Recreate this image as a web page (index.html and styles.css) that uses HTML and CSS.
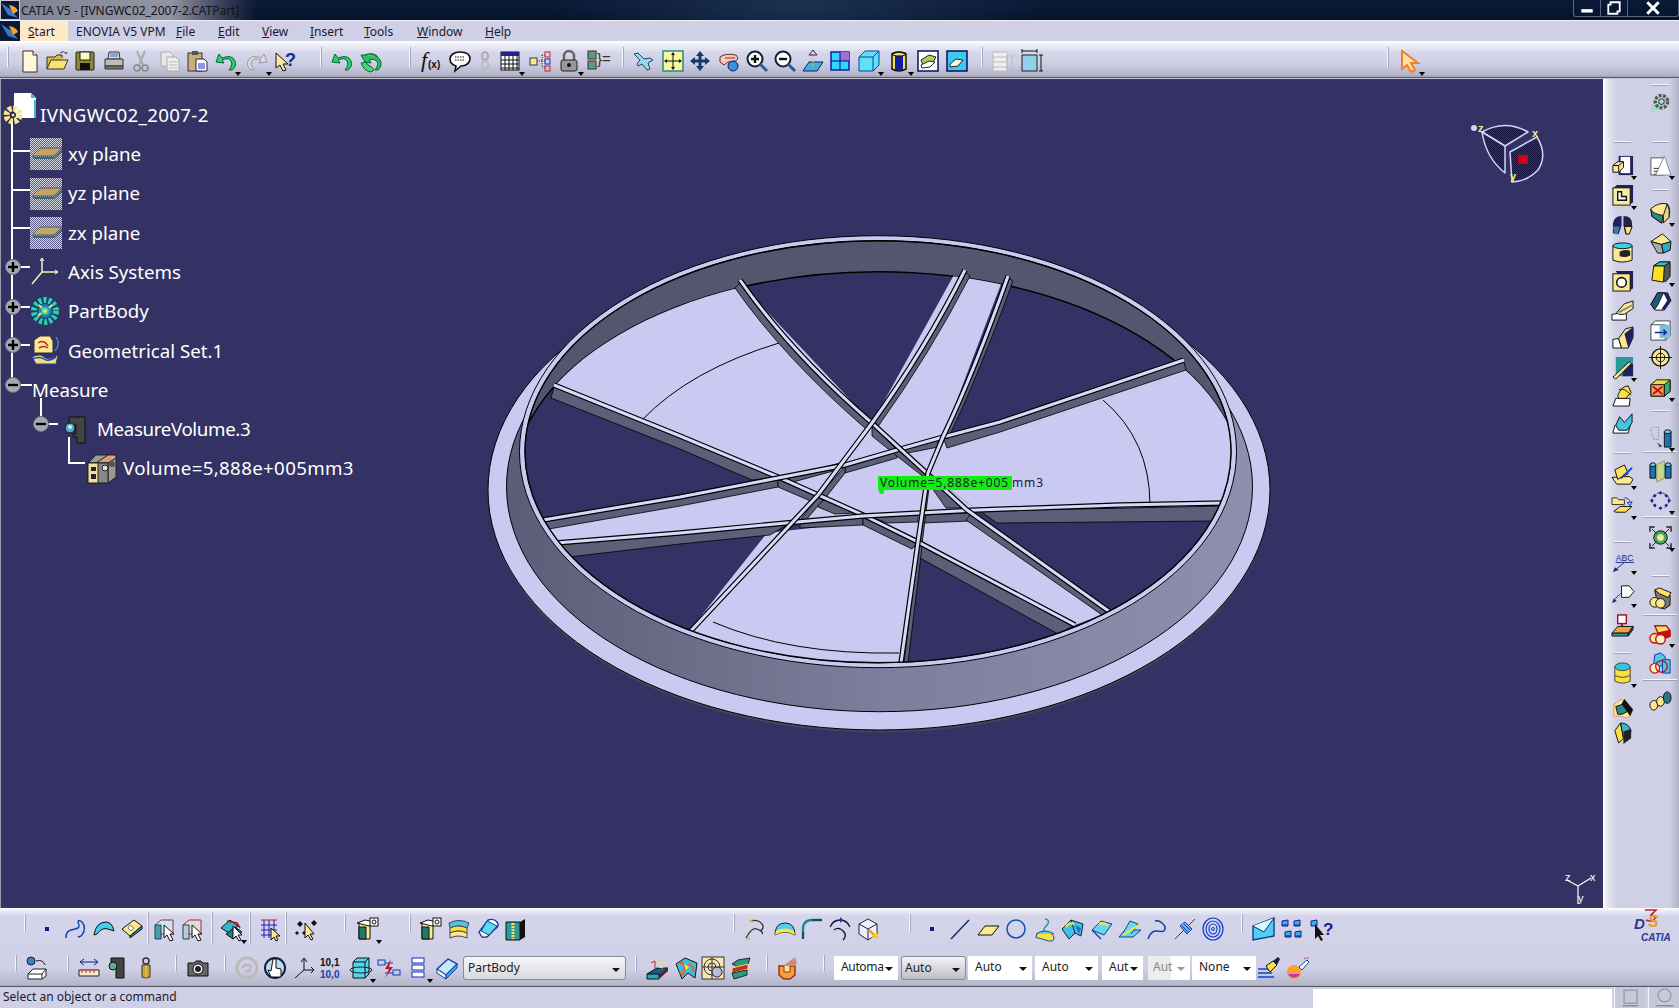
FILE: index.html
```html
<!DOCTYPE html>
<html lang="en">
<head>
<meta charset="utf-8">
<title>CATIA V5 - [IVNGWC02_2007-2.CATPart]</title>
<link rel="stylesheet" href="styles.css">
</head>
<body>
<div class="app">

<header class="title">
  <svg class="logo" viewBox="0 0 20 20"><rect width="20" height="20" fill="#0a1a3a"/><path d="M1 3l9 6 8 9-10-3z" fill="#3a7ac8"/><path d="M9 5q7 1 9 6l-5 3z" fill="#f8a030"/><rect x=".5" y=".5" width="19" height="19" fill="none" stroke="#ccc"/></svg>
  <span class="title-text">CATIA V5 - [IVNGWC02_2007-2.CATPart]</span>
  <div class="winbtns">
    <span class="wb wb-min"><svg viewBox="0 0 20 14"><rect x="5" y="8" width="10" height="3" fill="#fff"/></svg></span>
    <span class="wb wb-max"><svg viewBox="0 0 20 14"><path d="M7 2h8v8h-2v2H5V4h2z" fill="none" stroke="#fff" stroke-width="1.6"/></svg></span>
    <span class="wb wb-close"><svg viewBox="0 0 30 14"><path d="M10 2l10 10M20 2L10 12" stroke="#fff" stroke-width="2.6"/></svg></span>
  </div>
</header>

<nav class="menu">
  <svg class="logo" viewBox="0 0 20 20"><rect width="20" height="20" fill="#0a1a3a"/><path d="M1 3l9 6 8 9-10-3z" fill="#3a7ac8"/><path d="M9 5q7 1 9 6l-5 3z" fill="#f8a030"/></svg>
  <span class="m m-start"><u>S</u>tart</span>
  <span class="m">ENOVIA V5 VPM</span>
  <span class="m"><u>F</u>ile</span>
  <span class="m"><u>E</u>dit</span>
  <span class="m"><u>V</u>iew</span>
  <span class="m"><u>I</u>nsert</span>
  <span class="m"><u>T</u>ools</span>
  <span class="m"><u>W</u>indow</span>
  <span class="m"><u>H</u>elp</span>
  <div class="mdi">
    <span class="mb"><svg viewBox="0 0 16 16"><rect x="4" y="10" width="8" height="2" fill="#99a"/></svg></span>
    <span class="mb"><svg viewBox="0 0 16 16"><path d="M6 3h7v6h-2v4H3V6h3z" fill="none" stroke="#99a"/></svg></span>
    <span class="mb"><svg viewBox="0 0 16 16"><path d="M4 4l8 8M12 4l-8 8" stroke="#99a" stroke-width="1.5"/></svg></span>
  </div>
</nav>

<div class="bar top">
  <i class="grip"></i>
  <span class="i l8"><svg viewBox="0 0 24 24"><path d="M5 2h10l4 4v17H5z" fill="#fff8d8" stroke="#333"/><path d="M15 2v4h4" fill="#fff" stroke="#333"/></svg></span>
  <span class="i l1"><svg viewBox="0 0 24 24"><path d="M2 20V8h8l2-2h5v3" fill="#e0b840" stroke="#333"/><path d="M2 20l4-9h17l-4 9z" fill="#fce070" stroke="#333"/><path d="M15 4q4-3 6 1l1-2" fill="none" stroke="#333"/></svg></span>
  <span class="i l2"><svg viewBox="0 0 24 24"><rect x="3" y="3" width="18" height="18" rx="1" fill="#8a8a30" stroke="#222"/><rect x="7" y="3" width="10" height="8" fill="#fff8c0" stroke="#222"/><rect x="7" y="14" width="10" height="7" fill="#111"/></svg></span>
  <span class="i l3"><svg viewBox="0 0 24 24"><path d="M7 3h10l1 7H6z" fill="#dde" stroke="#333"/><path d="M8 5h8M8 7h8" stroke="#36c"/><path d="M3 10h18v7H3z" fill="#bbb" stroke="#333"/><path d="M3 17h18v3H3z" fill="#776" stroke="#333"/></svg></span>
  <span class="i l1"><svg viewBox="0 0 24 24"><path d="M8 2l6 14M16 2L10 16" stroke="#aaa" stroke-width="2"/><circle cx="8" cy="19" r="3" fill="none" stroke="#888" stroke-width="1.5"/><circle cx="16" cy="19" r="3" fill="none" stroke="#888" stroke-width="1.5"/></svg></span>
  <span class="i l3"><svg viewBox="0 0 24 24"><path d="M3 3h9l3 3v11H3z" fill="#e8e8e8" stroke="#aaa"/><path d="M9 8h9l3 3v11H9z" fill="#eee" stroke="#aaa"/><path d="M11 13h8M11 16h8M11 19h8" stroke="#bbb"/></svg></span>
  <span class="i l1"><svg viewBox="0 0 24 24"><rect x="3" y="4" width="14" height="18" fill="#c8b078" stroke="#333"/><rect x="7" y="2" width="6" height="4" fill="#555"/><path d="M11 10h8l3 3v9H11z" fill="#fff" stroke="#225"/><path d="M13 15h7M13 17h7M13 19h7" stroke="#22c"/></svg></span>
  <span class="i l3 d"><svg viewBox="0 0 24 24"><path d="M5 5l-3 8 8 1-2-3q7-3 9 1 2 3 0 6l-2 3h3q5-4 3-9-3-7-13-3z" fill="#30d070" stroke="#063"/></svg></span>
  <span class="i l5 d"><svg viewBox="0 0 24 24"><path d="M19 5l3 8-8 1 2-3q-7-3-9 1-2 3 0 6l2 3H6q-5-4-3-9 3-7 13-3z" fill="#ddd" stroke="#999"/></svg></span>
  <span class="i l2"><svg viewBox="0 0 24 24"><path d="M3 4v15l4-3 3 6 3-1-3-6h5z" fill="#ffe8a0" stroke="#111"/><text x="12" y="17" class="q">?</text></svg></span>
  <i class="grip l22"></i>
  <span class="i l7"><svg viewBox="0 0 24 24"><path d="M5 5l-3 8 8 1-2-3q7-3 9 1 2 3 0 6l-2 3h3q5-4 3-9-3-7-13-3z" fill="#30d070" stroke="#063"/></svg></span>
  <span class="i l2"><svg viewBox="0 0 24 24"><path d="M3 6l4 7 6 1-2-3q5-2 8 1 2 3 0 6l-2 3h3q5-5 2-10-5-9-13-5z" fill="#30c060" stroke="#063"/><path d="M3 14l5-1 2 3q4 1 6 5l-3 2q-7-1-10-9zM7 6q6-3 12 2" fill="#50d080" stroke="#063"/></svg></span>
  <i class="grip l26"></i>
  <span class="i l7"><svg viewBox="0 0 24 24"><text x="2" y="18" class="fx">f</text><text x="9" y="19" class="fx2">(x)</text></svg></span>
  <span class="i l3"><svg viewBox="0 0 24 24"><path d="M12 3c7 0 10 3 10 7s-4 7-9 7l-6 5 1-5c-3-1-6-3-6-7s4-7 10-7z" fill="#fff" stroke="#111" stroke-width="1.6"/><path d="M7 8h10M7 11h10" stroke="#111" stroke-dasharray="1.5 1"/></svg></span>
  <span class="i n l5"><svg viewBox="0 0 14 24"><ellipse cx="7" cy="7" rx="3" ry="4" fill="none" stroke="#aaa" stroke-width="2"/><ellipse cx="7" cy="16" rx="3" ry="4" fill="none" stroke="#bbb" stroke-width="2"/></svg></span>
  <span class="i l5 d"><svg viewBox="0 0 24 24"><rect x="3" y="3" width="18" height="18" fill="#fff" stroke="#111"/><path d="M3 11h18M3 15h18M3 19h18M7 7v14M11 7v14M15 7v14M19 7v14" stroke="#111"/><rect x="3" y="3" width="18" height="4" fill="#22228a"/></svg></span>
  <span class="i l4"><svg viewBox="0 0 24 24"><path d="M9 12h5M14 6v12M14 6h3M14 12h3M14 18h3" stroke="#333" stroke-dasharray="1 1"/><rect x="2" y="9" width="7" height="7" fill="#ffe880" stroke="#336"/><rect x="17" y="3" width="5" height="5" fill="none" stroke="#c22"/><rect x="17" y="10" width="5" height="5" fill="none" stroke="#22c"/><rect x="17" y="17" width="5" height="5" fill="none" stroke="#c22"/></svg></span>
  <span class="i l3 d"><svg viewBox="0 0 24 24"><path d="M7 11V7a5 5 0 0110 0v4" fill="none" stroke="#666" stroke-width="2.5"/><rect x="4" y="11" width="16" height="11" rx="2" fill="#999" stroke="#222"/><circle cx="12" cy="16" r="2" fill="#111"/></svg></span>
  <span class="i l2"><svg viewBox="0 0 24 24"><rect x="3" y="2" width="8" height="8" fill="#887" stroke="#333"/><rect x="5" y="4" width="4" height="4" fill="#3a8"/><rect x="3" y="12" width="8" height="8" fill="#887" stroke="#333"/><rect x="5" y="14" width="4" height="4" fill="#3a8"/><text x="12" y="15" class="br">}=</text></svg></span>
  <i class="grip l12"></i>
  <span class="i l7"><svg viewBox="0 0 24 24"><path d="M2 5l4-1 6 6 6-1 3 2-5 3 2 6-3 1-5-6-4 2-1-2 3-4z" fill="#9ad8f0" stroke="#246"/></svg></span>
  <span class="i l3"><svg viewBox="0 0 24 24"><rect x="2" y="2" width="20" height="20" fill="#f8f8a0" stroke="#2a8a7a" stroke-width="1.5"/><path d="M12 5v14M5 12h14" stroke="#111"/><path d="M12 3l2 3h-4zM12 21l2-3h-4zM3 12l3-2v4zM21 12l-3-2v4z" fill="#111"/></svg></span>
  <span class="i l1"><svg viewBox="0 0 24 24"><path d="M12 2l4 5h-2.500v3.500H17V8l5 4-5 4v-2.500h-3.500V17H16l-4 5-4-5h2.500v-3.500H7V16l-5-4 5-4v2.500h3.500V7H8z" fill="#123a6a"/></svg></span>
  <span class="i l3"><svg viewBox="0 0 24 24"><path d="M3 8q5-4 16-2l2 3-2 3-8 1-4 3-4-3z" fill="#f8c8c0" stroke="#533"/><circle cx="16" cy="17" r="5" fill="#3a90e0" stroke="#025"/><path d="M8 9h10" stroke="#a22"/></svg></span>
  <span class="i l2"><svg viewBox="0 0 24 24"><circle cx="10" cy="10" r="7.500" fill="#fff" stroke="#123" stroke-width="2"/><path d="M15 15l7 7" stroke="#2a5a9a" stroke-width="3"/><path d="M6 10h8M10 6v8" stroke="#111" stroke-width="2.400"/></svg></span>
  <span class="i l2"><svg viewBox="0 0 24 24"><circle cx="10" cy="10" r="7.500" fill="#fff" stroke="#123" stroke-width="2"/><path d="M15 15l7 7" stroke="#2a5a9a" stroke-width="3"/><path d="M6 10h8" stroke="#111" stroke-width="2.400"/></svg></span>
  <span class="i l2"><svg viewBox="0 0 24 24"><path d="M2 22l6-9h14l-6 9z" fill="#4ab0d8" stroke="#025"/><path d="M12 17V6" stroke="#e8c020" stroke-dasharray="2 1"/><path d="M12 1l4 5H8z" fill="none" stroke="#225"/></svg></span>
  <span class="i l1"><svg viewBox="0 0 24 24"><rect x="3" y="3" width="18" height="18" fill="#30d8f8" stroke="#1010a0" stroke-width="1.400"/><rect x="12" y="3" width="9" height="9" fill="#a070d0"/><path d="M12 3v18M3 12h18" stroke="#00a"/></svg></span>
  <span class="i l3 d"><svg viewBox="0 0 24 24"><path d="M2 8l6-6h14v14l-6 6H2z" fill="#60e0f8" stroke="#1040a0"/><path d="M2 8h14v14M16 8l6-6" fill="none" stroke="#1040a0"/></svg></span>
  <span class="i l4 d"><svg viewBox="0 0 24 24"><path d="M5 5q7-4 14 0v15q-7 4-14 0z" fill="#f0e060" stroke="#111" stroke-width="1.500"/><path d="M8 7h8v14H8z" fill="#1020a0"/><ellipse cx="12" cy="5" rx="7" ry="2" fill="none" stroke="#111"/></svg></span>
  <span class="i l3"><svg viewBox="0 0 24 24"><rect x="2" y="2" width="20" height="20" fill="#fff" stroke="#000050" stroke-width="1.400"/><path d="M5 11l8-5 7 2-4 7-9 1z" fill="#a8d060" stroke="#222"/><path d="M5 16l8-4 6 1-5 5-8 1z" fill="#fff" stroke="#222"/></svg></span>
  <span class="i l3"><svg viewBox="0 0 24 24"><rect x="2" y="2" width="20" height="20" fill="#40c8f0" stroke="#000050" stroke-width="1.400"/><path d="M5 15l6-5 7 1-5 6-8 1z" fill="#f8f8e8" stroke="#222"/></svg></span>
  <i class="grip l11"></i>
  <span class="i l7"><svg viewBox="0 0 24 24"><path d="M2 3h14v19H2zM2 8h14M2 13h14M2 18h14M16 7v15M21 7v15M18 7h6M18 22h6" fill="#eee" stroke="#bbb"/></svg></span>
  <span class="i l3"><svg viewBox="0 0 24 24"><rect x="2" y="6" width="15" height="16" fill="#90d0e8" stroke="#222"/><path d="M2 2h15M2 0v4M17 0v4M21 6v16M19 6h4M19 22h4" fill="none" stroke="#111"/></svg></span>
  <i class="grip push"></i>
  <span class="i l8 d"><svg viewBox="0 0 24 24"><path d="M4 2v18l5-4 4 7 4-2-4-7h7z" fill="#ffe0b0" stroke="#f08020" stroke-width="2"/></svg></span>
</div>
<div class="shade"></div>

<div class="mid">
  <main class="view">
    <svg class="canvas" viewBox="0 79 1602 829">
      <defs>
        <linearGradient id="band" x1="0" x2="1" y1="0" y2="0"><stop offset="0" stop-color="#5c5c78"/><stop offset=".5" stop-color="#7e7e9c"/><stop offset="1" stop-color="#8e8eae"/></linearGradient>
        <pattern id="dith" width="2" height="2" patternUnits="userSpaceOnUse"><rect width="2" height="2" fill="#5a5a86"/><rect width="1" height="1" fill="#d8d8e4"/><rect x="1" y="1" width="1" height="1" fill="#d8d8e4"/></pattern>
        <pattern id="dark" width="2" height="2" patternUnits="userSpaceOnUse"><rect width="2" height="2" fill="#343264"/><rect width="1" height="1" fill="#14143e"/><rect x="1" y="1" width="1" height="1" fill="#14143e"/></pattern>
        <clipPath id="rim"><ellipse cx="878" cy="451.700" rx="353" ry="211"/></clipPath>
        <clipPath id="floor"><ellipse cx="878" cy="486.700" rx="366" ry="215"/></clipPath>
      </defs>

      <g class="lines">
        <path d="M12 120V383M12 151H30M12 190H30M12 228H30M20 267H30M20 307H30M20 345H30M20 385H32M41 398V418M49 424H58M69 437V463H85"/>
      </g>
      <g class="node"><circle cx="13" cy="267" r="7.500"/><path d="M8 267h10M13 262v10"/></g>
      <g class="node"><circle cx="13" cy="307" r="7.500"/><path d="M8 307h10M13 302v10"/></g>
      <g class="node"><circle cx="13" cy="345" r="7.500"/><path d="M8 345h10M13 340v10"/></g>
      <g class="node"><circle cx="13" cy="385" r="7.500"/><path d="M8 385h10"/></g>
      <g class="node"><circle cx="41" cy="424" r="7.500"/><path d="M36 424h10"/></g>

      <g class="part">
        <ellipse cx="879" cy="492.500" rx="391" ry="240" fill="#44445a"/>
        <ellipse class="lav" cx="879" cy="490" rx="391" ry="240"/>
        <ellipse cx="879.500" cy="486.700" rx="373" ry="225" fill="url(#band)" stroke="#000"/>
        <ellipse class="lav" cx="878" cy="451.700" rx="358.500" ry="216"/>
        <ellipse cx="878" cy="451.700" rx="353" ry="211" fill="#55556f" stroke="#000"/>
        <g clip-path="url(#rim)">
          <ellipse cx="878" cy="486.700" rx="366" ry="215" fill="#343264" stroke="#000" stroke-width="1.500"/>
          <g clip-path="url(#floor)">
            <path class="sec" d="M554 385L520 240 731 240 740 283 872 423 897 450 845 465 778 477z"/>
            <path class="sec" d="M965 255L1012 255 943 437 897 450 872 423z"/>
            <path class="sec" d="M1186 366L1320 320 1320 505 977 510 897 450 943 437z"/>
            <path class="sec" d="M778 477L897 450 977 510 920 545 863 516 818 497z"/>
            <path class="sec" d="M500 527L778 487 818 497 863 516 797 522 500 548z"/>
            <path class="sec" d="M767 533L863 522 920 550 901 690 600 690 690 630z"/>
            <path class="sec" d="M920 545L970 512 1110 612 1075 625z"/>
            <path class="arc" d="M642 420Q690 370 779 343"/>
            <path class="arc" d="M1103 400Q1150 440 1150 505"/>
            <path class="arc" d="M713 622Q790 655 899 653"/>
          </g>

          <path class="side" d="M1184 362L1186 370 1000 432 947 448 943 437 1000 422z"/>
          <path class="side" d="M903 447L938 440 938 447 898 455z"/>
          <path class="side" d="M897 450L845 465 845 473 897 458z"/>
          <path class="side" d="M840 463L787 477 793 482 837 470z"/>
          <path class="side" d="M778 478L680 497 543 520 543 530 680 506 778 487z"/>
          <path class="side" d="M980 511L1225 506 1214 521 997 523z"/>
          <path class="side" d="M923 515L970 513 970 521 923 523z"/>
          <path class="side" d="M872 517L918 515 918 522 887 523z"/>
          <path class="side" d="M863 517L800 520 800 528 863 525z"/>
          <path class="side" d="M790 523L680 533 556 545 569 557 680 544 770 535z"/>
          <path class="side" d="M554 387L680 436 778 477 752 480 680 449 551 398z"/>
          <path class="side" d="M778 477L818 497 813 502 778 487z"/>
          <path class="side" d="M818 497L855 513 835 514 818 507z"/>
          <path class="side" d="M863 515L918 542 912 549 863 525z"/>
          <path class="side" d="M920 545L1075 625 1058 634 920 558z"/>
          <path class="side" d="M740 283Q790 352 872 423L866 429Q784 358 735 288z"/>
          <path class="side" d="M872 425L897 450 892 452 872 436z"/>
          <path class="side" d="M897 450L928 472 925 478 893 453z"/>
          <path class="side" d="M928 473L967 508 946 508 925 478z"/>
          <path class="side" d="M970 515L1110 612 1105 617 966 520z"/>
          <path class="side" d="M965 272Q925 350 872 423L877 428Q930 354 970 276z"/>
          <path class="side" d="M845 466L818 497 823 501 845 473z"/>
          <path class="side" d="M1008 278Q975 370 943 437L948 439Q980 372 1013 281z"/>
          <path class="side" d="M818 497L800 520 806 520 823 500z"/>
          <path class="side" d="M925 480L918 542 922 544 930 480zM918 545L904 663 908 663 922 547z"/>

          <path class="rk" d="M554 385L680 436 778 477 863 515 920 543 1075 625"/>
          <path class="rl" d="M554 385L680 436 778 477 863 515 920 543 1075 625"/>
          <path class="rk" d="M1184 360L1000 422 943 437 897 450 845 465 778 478 680 497 543 520"/>
          <path class="rl" d="M1184 360L1000 422 943 437 897 450 845 465 778 478 680 497 543 520"/>
          <path class="rk" d="M1224 503L1120 505 977 510 863 516 797 522 680 533 556 543"/>
          <path class="rl" d="M1224 503L1120 505 977 510 863 516 797 522 680 533 556 543"/>
          <path class="rk" d="M740 280Q790 352 872 423L967 510 1110 612"/>
          <path class="rl" d="M740 280Q790 352 872 423L967 510 1110 612"/>
          <path class="rk" d="M965 270Q925 350 872 423L818 495 687 635"/>
          <path class="rl" d="M965 270Q925 350 872 423L818 495 687 635"/>
          <path class="rk" d="M1008 276Q975 370 943 437L928 473 918 542 901 663"/>
          <path class="rl" d="M1008 276Q975 370 943 437L928 473 918 542 901 663"/>
        </g>
        <ellipse cx="878" cy="451.700" rx="353" ry="211" fill="none" stroke="#000" stroke-width="1.400"/>
      </g>

      <g class="compass">
        <path d="M1482 132Q1505 119 1528 132L1505 146z"/>
        <path d="M1482 132Q1486 158 1505 173V146z"/>
        <path d="M1510 152L1537 137Q1548 155 1538 170 1526 182 1512 182z"/>
        <rect class="red" x="1518" y="155" width="10" height="9"/>
        <circle class="ball" cx="1474" cy="128" r="3"/>
        <text x="1478" y="132">z</text><text x="1532" y="137">x</text><text x="1510" y="180">y</text>
      </g>
      <g class="axis">
        <path d="M1578 886L1567 880M1578 886L1591 878M1578 886V904"/>
        <text x="1565" y="881">z</text><text x="1590" y="881">x</text><text x="1578" y="902">y</text>
      </g>
    </svg>

    <ul class="tree">
      <li class="row r0 ls-up"><svg class="ti ti-root" viewBox="0 0 28 30"><path d="M6 -7h17l5 5v20H6z" fill="#fff"/><path d="M23 -7l5 5h-5zM26 0h2v18h-2z" fill="#40b8e8"/><circle cx="5" cy="15" r="6.500" fill="none" stroke="#f8e890" stroke-width="6" stroke-dasharray="3.500 1.500"/><circle cx="5" cy="15" r="3" fill="#223"/><circle cx="5" cy="15" r="1.500" fill="#f8e890"/></svg><span>IVNGWC02_2007-2</span></li>
      <li class="row r1"><svg class="ti" viewBox="0 0 32 32"><rect width="32" height="32" fill="url(#dith)"/><path d="M2 18l8-8h22l-8 8z" fill="#c0a468" stroke="#556"/><path d="M2 19h22l8-8v3l-8 7H4z" fill="#3a6a7a"/></svg><span>xy plane</span></li>
      <li class="row r1"><svg class="ti" viewBox="0 0 32 32"><rect width="32" height="32" fill="url(#dith)"/><path d="M2 18l8-8h22l-8 8z" fill="#c0a468" stroke="#556"/><path d="M2 19h22l8-8v3l-8 7H4z" fill="#3a6a7a"/></svg><span>yz plane</span></li>
      <li class="row r1"><svg class="ti" viewBox="0 0 32 32"><rect width="32" height="32" fill="url(#dith)"/><path d="M2 18l8-8h22l-8 8z" fill="#c0a468" stroke="#556"/><path d="M2 19h22l8-8v3l-8 7H4z" fill="#3a6a7a"/></svg><span>zx plane</span></li>
      <li class="row r1"><svg class="ti" viewBox="0 0 32 32"><path d="M12 16V3M12 16l15 0M12 16L2 28" stroke="#f8f0b0" stroke-width="1.500" fill="none"/><path d="M10 5l2-3 2 3M25 14l3 2-3 2" stroke="#fff" fill="none"/></svg><span>Axis Systems</span></li>
      <li class="row r1"><svg class="ti" viewBox="0 0 32 32"><circle cx="15" cy="15" r="11" fill="none" stroke="#1c3c70" stroke-width="9" stroke-dasharray="5 2"/><circle cx="15" cy="15" r="11" fill="none" stroke="#30d0a8" stroke-width="6" stroke-dasharray="3 2"/><circle cx="15" cy="15" r="7" fill="#1880b0"/><circle cx="15" cy="15" r="4" fill="#30d0a8"/><circle cx="15" cy="15" r="2" fill="#f0e060"/><path d="M8 20l3-3M22 9l-3 3M9 9l3 3" stroke="#f0e060" stroke-width="2"/></svg><span>PartBody</span></li>
      <li class="row r1"><svg class="ti" viewBox="0 0 32 32"><path d="M4 5l6-4h10l3 5v12H4z" fill="#fce890" stroke="#333"/><path d="M8 8q6-4 10 3M9 13q5-3 9 0" fill="none" stroke="#c02020" stroke-width="1.500"/><path d="M2 22q8-4 12 0t14-2l-2 9H6z" fill="#f0e070" stroke="#2040c0"/><path d="M2 24q8-3 12 0t12-2" fill="none" stroke="#2040c0" stroke-width="1.500"/><path d="M26 2q5 7-1 14" fill="none" stroke="#60b0f0"/></svg><span>Geometrical Set.1</span></li>
      <li class="row r2"><span>Measure</span></li>
      <li class="row r3 ls-down"><svg class="ti ti-mv" viewBox="0 0 26 30"><path d="M6 2h16v26H14V22H10v-3h3V10H6z" fill="#444" stroke="#111"/><circle cx="7" cy="13" r="5" fill="#50a8d0" stroke="#111"/><circle cx="7" cy="12" r="2" fill="#c0f0f8"/></svg><span>MeasureVolume.3</span></li>
      <li class="row r4 ls-up"><svg class="ti ti-vol" viewBox="0 0 32 32"><path d="M2 10l8-8h20v22l-8 6H2z" fill="#999" stroke="#222"/><path d="M2 10h8l12-8h8v3l-8 5z" fill="#d8a080" stroke="#222"/><path d="M2 10h20v20H2z" fill="#f0e0a0" stroke="#222"/><path d="M12 10h10v20H12z" fill="#888" stroke="#222"/><path d="M5 14h5v4H5zM5 21h5v5H5z" fill="#222"/><circle cx="19" cy="15" r="3" fill="#ddd" stroke="#222"/><circle cx="26" cy="11" r="3" fill="#555"/></svg><span>Volume=5,888e+005mm3</span></li>
    </ul>

    <div class="vol"><span class="vol-hl">Volume=5,888e+005</span>mm3</div>
  </main>

  <aside class="dock">
    <div class="col">
      <i class="dg t62"></i>
      <span class="i t9 d"><svg viewBox="0 0 24 24"><rect x="8" y="2" width="15" height="20" fill="#202060"/><path d="M10 3h10v17H10z" fill="#fff"/><path d="M2 12l5-4h6v6l-5 5H2z" fill="#f8e8a0" stroke="#111"/><path d="M2 12h6v7M8 12l5-4" fill="none" stroke="#111"/></svg></span>
      <span class="i t4 d"><svg viewBox="0 0 24 24"><path d="M3 4l3-3h17v18l-4 3H3z" fill="#202060"/><rect x="2" y="4" width="18" height="18" fill="#f8eca0" stroke="#111"/><path d="M7 8v9h9v-4h-5V8z" fill="#fff" stroke="#111" stroke-width="1.500"/></svg></span>
      <span class="i t4"><svg viewBox="0 0 24 24"><path d="M2 20V10q1-8 9-8v10l-3 9z" fill="#202060"/><path d="M13 2q9 0 9 8v4l-4 7h-3l-2-9z" fill="#224"/><path d="M14 13h8l-3 8h-3z" fill="#f8e880" stroke="#111"/><path d="M2 13h7l-2 8H4z" fill="#3a80a0"/></svg></span>
      <span class="i t1"><svg viewBox="0 0 24 24"><path d="M2 5v15q10 4 20 0V5z" fill="#fce890" stroke="#111"/><ellipse cx="12" cy="5" rx="10" ry="3" fill="#40d0e8" stroke="#111"/><path d="M9 11q9-3 11 0v4q-5 3-11 1z" fill="#222"/></svg></span>
      <span class="i t2"><svg viewBox="0 0 24 24"><path d="M5 2h18v18l-4 3z" fill="#202060"/><rect x="2" y="5" width="18" height="18" fill="#fce890" stroke="#111"/><circle cx="11" cy="14" r="5" fill="#fff" stroke="#111" stroke-width="1.600"/></svg></span>
      <span class="i t4"><svg viewBox="0 0 24 24"><path d="M1 22v-6l7-1h8v7z" fill="#fff" stroke="#111"/><path d="M6 14l8-9 9-3v8l-9 6H8z" fill="#fce890" stroke="#111"/><path d="M8 14l15-8" stroke="#888" stroke-width="2"/></svg></span>
      <span class="i t1"><svg viewBox="0 0 24 24"><path d="M2 23V14l6-1 3 10z" fill="#fff" stroke="#111"/><path d="M8 13l7-10 8-2v11l-5 11h-7z" fill="#fce890" stroke="#111"/><path d="M14 8l9-7v11l-5 11z" fill="#202060"/></svg></span>
      <span class="i t4 d"><svg viewBox="0 0 24 24"><rect x="5" y="1" width="18" height="20" fill="#2a9a9a"/><path d="M14 10l9-2v13H12z" fill="#202060"/><path d="M2 22L19 6l2 2L5 24z" fill="#fce890" stroke="#111"/></svg></span>
      <span class="i t2"><svg viewBox="0 0 24 24"><path d="M2 23l3-8h15l-1 8z" fill="#fff" stroke="#111"/><path d="M7 12q4-10 11-10l3 7-6 6H8z" fill="#fce040" stroke="#111"/><path d="M8 6q6-3 13 6" fill="none" stroke="#223"/></svg></span>
      <span class="i t2"><svg viewBox="0 0 24 24"><path d="M2 22l2-8h16l-2 8z" fill="#fff" stroke="#111"/><path d="M5 14l4-9 5 6 8-9v9l-5 8H8z" fill="#40c8e0" stroke="#111"/></svg></span>
      <i class="dg t16"></i>
      <span class="i t8 d"><svg viewBox="0 0 24 24"><path d="M1 14l5 7h14l3-5-4-3z" fill="#fce890" stroke="#111"/><path d="M4 6l10-5 4 9-11 6z" fill="#fce060" stroke="#111"/><path d="M10 15L22 4" stroke="#1040d0" stroke-width="2"/></svg></span>
      <span class="i t4 d"><svg viewBox="0 0 24 24"><path d="M1 4h5l2 2h6v5H1z" fill="#fce890" stroke="#333"/><path d="M14 4q5 0 6 5l2-1-2 4-3-3 2 0" fill="none" stroke="#1030c0"/><path d="M3 18l7-5h12l-7 6H5z" fill="#fce060" stroke="#111"/></svg></span>
      <i class="dg t23"></i>
      <span class="i t4 d"><svg viewBox="0 0 24 24"><text x="5" y="13" class="abc">ABC</text><path d="M5 14h19M14 14L3 23" fill="none" stroke="#1a2a8a"/><path d="M2 24l2-5 4 3z" fill="#1a2a8a"/></svg></span>
      <span class="i t7 d"><svg viewBox="0 0 24 24"><path d="M11 4h8l5 6-5 6h-8z" fill="#fff" stroke="#111"/><path d="M10 12L2 20" stroke="#1a2a8a"/><path d="M1 22l2-5 3 3z" fill="#1a2a8a"/></svg></span>
      <span class="i t6"><svg viewBox="0 0 24 24"><rect x="7" y="1" width="9" height="9" fill="#fff" stroke="#a01020" stroke-width="1.500"/><path d="M11.500 10v6" stroke="#a01020" stroke-width="2"/><path d="M1 20l6-7h16l-5 7z" fill="#f0a040" stroke="#111"/><path d="M1 20h17v3H1z" fill="#30a0b0" stroke="#111"/><path d="M18 20l5-7v3l-5 7z" fill="#207080" stroke="#111"/></svg></span>
      <i class="dg t14"></i>
      <span class="i t6 d"><svg viewBox="0 0 24 24"><path d="M4 5v15q8 4 16 0V5z" fill="#fce040" stroke="#444"/><path d="M4 14q8 4 16 0" fill="none" stroke="#444"/><ellipse cx="12" cy="5" rx="8" ry="4" fill="#30c8d8" stroke="#444"/></svg></span>
      <span class="i t8"><svg viewBox="0 0 24 24"><path d="M3 9l8-6 12 13-6 7-7-2H3z" fill="#fce890" stroke="#c06020" stroke-dasharray="1 1"/><path d="M5 11l9-3 5 7-7 4H7z" fill="#2a8a8a" stroke="#111"/><path d="M14 3l9 11-3 7-9-13z" fill="#111"/></svg></span>
      <span class="i"><svg viewBox="0 0 24 24"><path d="M4 9l6-8 3 16-5 5z" fill="#fce040" stroke="#111"/><path d="M10 1q9 0 11 9l-8 7z" fill="#30b8c8" stroke="#111"/><path d="M13 10l8-3v10l-8 6z" fill="#222"/></svg></span>
    </div>
    <div class="col">
      <i class="dg t5"></i>
      <span class="i t4"><svg viewBox="0 0 24 24"><path d="M2 13L22 5 20 14 2 22z" fill="#a8d8c8"/><circle cx="13" cy="10" r="6.500" fill="none" stroke="#555" stroke-width="3.500" stroke-dasharray="3 1.500"/><circle cx="13" cy="10" r="3" fill="none" stroke="#222"/></svg></span>
      <i class="dg t25"></i>
      <span class="i t9 d"><svg viewBox="0 0 24 24"><path d="M2 4h13v18H2z" fill="#fff" stroke="#555"/><path d="M5 15h9M5 18h9M5 21h9" stroke="#222"/><path d="M7 22l9-20 7 20z" fill="#fff" stroke="#888"/></svg></span>
      <i class="dg t11"></i>
      <span class="i t8 d"><svg viewBox="0 0 24 24"><path d="M2 8q8-7 17-5 4 5 2 14l-8 6-10-7z" fill="#fce890" stroke="#111"/><path d="M2 9q3 5 13 6l-2 8-10-7z" fill="#2a8a8a" stroke="#111"/><path d="M19 3q3 5 2 14l-6 6 0-8z" fill="#f0d090" stroke="#111"/></svg></span>
      <span class="i t5"><svg viewBox="0 0 24 24"><path d="M2 10L14 2l9 8-10 3z" fill="#fce890" stroke="#111"/><path d="M2 10l11 3 2 9H9z" fill="#aaa" stroke="#111"/><path d="M13 13l10-3-1 9-7 3z" fill="#30a8c8" stroke="#111"/></svg></span>
      <span class="i t3 d"><svg viewBox="0 0 24 24"><path d="M5 5l6-4h11v15l-5 6z" fill="#555" stroke="#111"/><path d="M5 5h11l-1 17-12-2z" fill="#fce020" stroke="#111"/><path d="M11 1h11l-6 4H5z" fill="#30c8d8" stroke="#111"/></svg></span>
      <span class="i t2"><svg viewBox="0 0 24 24"><path d="M2 16L9 4h10l4 8-7 10H6z" fill="#fff" stroke="#111"/><path d="M2 16L9 4h6l-6 13-3 4z" fill="#1a5a7a" stroke="#111"/><path d="M15 4h5l3 8-7 10-3-1 6-9z" fill="#202060"/></svg></span>
      <span class="i t4"><svg viewBox="0 0 24 24"><path d="M2 6l5-4h15v16l-5 4H2z" fill="#fff" stroke="#444"/><path d="M2 6h15v16" fill="none" stroke="#444"/><rect x="11" y="6" width="11" height="14" fill="#7ac0e0"/><path d="M6 14h12M15 11l3 3-3 3" fill="none" stroke="#1a2a8a" stroke-width="1.500"/></svg></span>
      <span class="i t1"><svg viewBox="0 0 24 24"><circle cx="12" cy="12" r="9" fill="#fce890" stroke="#111" stroke-width="1.500"/><circle cx="12" cy="12" r="4.500" fill="none" stroke="#111"/><path d="M12 0v24M0 12h24" stroke="#111"/></svg></span>
      <span class="i t4 d"><svg viewBox="0 0 24 24"><path d="M2 9l6-5h14v12l-6 5H2z" fill="#e8e040" stroke="#111"/><path d="M2 9h14v12H2z" fill="#f0a060" stroke="#111"/><path d="M4 11l10 8M14 11L4 19" stroke="#d01010" stroke-width="2"/><path d="M16 9l6-5v12l-6 5z" fill="#30b070" stroke="#111"/></svg></span>
      <i class="dg t10"></i>
      <span class="i t12 d"><svg viewBox="0 0 24 24"><path d="M2 4l3-3h5v13H5z" fill="none" stroke="#888" stroke-dasharray="1.500 1.500"/><path d="M9 18l4 3M13 21l-3 0" stroke="#111"/><path d="M16 6h7v16h-7z" fill="#2070b0" stroke="#111"/><ellipse cx="19.500" cy="6" rx="3.500" ry="2" fill="#60d0f0" stroke="#111"/></svg></span>
      <i class="dg wide t1"></i>
      <span class="i t4"><svg viewBox="0 0 24 24"><path d="M1 6h6v14H1z" fill="#1a70b0" stroke="#111"/><ellipse cx="4" cy="6" rx="3" ry="2" fill="#60d0f0" stroke="#111"/><path d="M8 6l8-4v18l-8 4z" fill="#c8d888" stroke="#8a9a60"/><path d="M17 6h6v14h-6z" fill="#1a70b0" stroke="#111"/><ellipse cx="20" cy="6" rx="3" ry="2" fill="#60d0f0" stroke="#111"/></svg></span>
      <span class="i t4 d"><svg viewBox="0 0 24 24"><ellipse cx="12" cy="12" rx="9" ry="8" fill="none" stroke="#1a2a8a" stroke-dasharray="3 3"/><path d="M12 2l2 2-2 2-2-2zM12 18l2 2-2 2-2-2zM3 10l2 2-2 2-2-2zM21 10l2 2-2 2-2-2zM6 5l2 2-2 2-2-2zM18 5l2 2-2 2-2-2zM6 15l2 2-2 2-2-2zM18 15l2 2-2 2-2-2z" fill="#1a2a8a"/></svg></span>
      <i class="dg wide t3"></i>
      <span class="i t6 d"><svg viewBox="0 0 24 24"><circle cx="12" cy="12" r="7" fill="#50a860" stroke="#111"/><circle cx="12" cy="12" r="3.500" fill="#e8f0a0"/><path d="M1 6V1h5M23 6V1h-5M1 18v5h5M23 18v5h-5" fill="none" stroke="#222" stroke-width="1.500"/><path d="M3 3l5 5M21 3l-5 5M3 21l5-5M21 21l-5-5" stroke="#222"/></svg></span>
      <i class="dg t25"></i>
      <span class="i t8"><svg viewBox="0 0 24 24"><path d="M6 4h12l4 5v10l-6 4-6-2z" fill="#777" stroke="#111"/><path d="M6 3l5-2 12 5-3 5-9-4z" fill="#fce060" stroke="#111"/><circle cx="6" cy="16" r="5" fill="#fce890" stroke="#111"/><circle cx="12" cy="17" r="5" fill="#fce890" stroke="#111"/></svg></span>
      <i class="dg wide t3"></i>
      <span class="i t4 d"><svg viewBox="0 0 24 24"><path d="M6 4h12l4 5v6l-8 3-3-3z" fill="#fce060" stroke="#c01010" stroke-width="1.500"/><path d="M8 11l14-3v7l-9 4z" fill="#c01010"/><circle cx="6" cy="17" r="5" fill="#fce890" stroke="#c01010" stroke-width="1.500"/><circle cx="12" cy="18" r="5" fill="#f8f0c0" stroke="#c01010" stroke-width="1.500"/></svg></span>
      <span class="i t4"><svg viewBox="0 0 24 24"><path d="M6 3l6-2 5 4v8l-8 3-4-4z" fill="#50c8e0" stroke="#1030b0"/><path d="M14 8h8v14h-8z" fill="#50c8e0" stroke="#1030b0"/><circle cx="6" cy="17" r="5" fill="#f8f0c0" stroke="#c01010" stroke-width="1.300"/><circle cx="13" cy="15" r="6" fill="none" stroke="#c01010" stroke-width="1.300"/></svg></span>
      <i class="dg wide t3"></i>
      <span class="i t6"><svg viewBox="0 0 24 24"><ellipse cx="5" cy="17" rx="4" ry="5" fill="#fce890" stroke="#111"/><ellipse cx="12" cy="13" rx="4" ry="5" fill="#fce890" stroke="#111"/><ellipse cx="19" cy="9" rx="4" ry="6" fill="#207a8a" stroke="#111"/></svg></span>
    </div>
  </aside>
</div>

<div class="bottom">
  <div class="bar row1">
    <i class="grip"></i>
    <span class="i l8"><svg viewBox="0 0 24 24"><rect x="10" y="10" width="4" height="4" fill="#10207a"/></svg></span>
    <span class="i l2"><svg viewBox="0 0 24 24"><path d="M3 21Q3 14 8 13t7-2 0-6q0-3 4 0 5 6 0 13-3 3-4 1" fill="none" stroke="#1040b0" stroke-width="1.400"/></svg></span>
    <span class="i l2"><svg viewBox="0 0 24 24"><path d="M3 18q2-13 12-13 6 0 8 9l-6-2q-6-2-11 5z" fill="#40d0e8" stroke="#111"/></svg></span>
    <span class="i l3"><svg viewBox="0 0 24 24"><path d="M2 12l12-9 8 6-12 10z" fill="#fce890" stroke="#111"/><path d="M10 19l12-10v3l-12 9z" fill="#2a9a9a" stroke="#111"/><path d="M10 8l4 3-3 3-3-3z" fill="#fff" stroke="#777"/></svg></span>
    <i class="vs l2"></i>
    <span class="i l3"><svg viewBox="0 0 24 24"><path d="M2 8l6-5h12v14H8z" fill="#c8e8f0" stroke="#a03030"/><path d="M2 8h6v14H2z" fill="#4a9ab0" stroke="#204060"/><path d="M11 8v13l3-3 3 6 3-1-3-6h4z" fill="#fff" stroke="#111"/></svg></span>
    <span class="i l2"><svg viewBox="0 0 24 24"><path d="M2 8l6-5h12v14H8z" fill="#ddd" stroke="#a03030"/><path d="M2 8h6v14H2z" fill="#bcc" stroke="#204060"/><path d="M11 8v13l3-3 3 6 3-1-3-6h4z" fill="#fff" stroke="#111"/></svg></span>
    <i class="vs l5"></i>
    <span class="i l6 d"><svg viewBox="0 0 24 24"><path d="M1 11l9-8 8 6-9 7z" fill="#30b8c8" stroke="#111"/><path d="M6 17l9-7 7 5-9 7z" fill="#208090" stroke="#111"/><path d="M7 4l10 2 3 5" fill="none" stroke="#c01010" stroke-width="1.500"/><path d="M13 9v13l3-3 3 5 2-1-3-5h4z" fill="#fff" stroke="#111"/></svg></span>
    <i class="vs l4"></i>
    <span class="i l6"><svg viewBox="0 0 24 24"><path d="M3 8h16M3 13h16M3 18h14M6 3v18M11 3v18M16 3v14" stroke="#1a20c0"/><path d="M3 3h16" stroke="#c02020"/><path d="M13 11v12l3-3 2 4 2-1-2-4h4z" fill="#ffe890" stroke="#111"/></svg></span>
    <i class="vs l2"></i>
    <span class="i l6"><svg viewBox="0 0 24 24"><path d="M6 4l3 3-3 3-3-3zM20 3l3 3-3 3-3-3zM10 14l2 2-2 2-2-2zM3 14l2 2-2 2-2-2z" fill="#111"/><path d="M11 6v15l3-3 3 5 2-1-3-5h4z" fill="#ffe890" stroke="#111"/></svg></span>
    <i class="grip l25"></i>
    <span class="i l8 d"><svg viewBox="0 0 24 24"><path d="M4 6h8l3 3v13H4z" fill="#fce890" stroke="#111"/><path d="M10 3L2 6l12 3 6-4z" fill="#fff" stroke="#111"/><path d="M4 10h7v12H4z" fill="#207a6a" stroke="#111"/><rect x="15" y="1" width="8" height="8" fill="#fff" stroke="#111"/><circle cx="19" cy="5" r="2" fill="none" stroke="#111"/></svg></span>
    <i class="grip l29"></i>
    <span class="i l6"><svg viewBox="0 0 24 24"><path d="M4 6h8l3 3v13H4z" fill="#fce890" stroke="#111"/><path d="M10 3L2 6l12 3 6-4z" fill="#fff" stroke="#111"/><path d="M4 10h7v12H4z" fill="#207a6a" stroke="#111"/><rect x="15" y="1" width="8" height="8" fill="#fff" stroke="#111"/><circle cx="19" cy="5" r="2" fill="none" stroke="#111"/></svg></span>
    <span class="i l3"><svg viewBox="0 0 24 24"><path d="M2 6q10-5 20 0l-2 5q-8-4-17 0z" fill="#50c8d8" stroke="#445"/><path d="M3 11q8-4 17 0v5q-9-4-17 0z" fill="#fce040" stroke="#445"/><path d="M3 16q8-4 17 0v5q-9-4-17 0z" fill="#fce890" stroke="#445"/></svg></span>
    <span class="i l3"><svg viewBox="0 0 24 24"><path d="M12 3q6-2 9 2t-2 7l-8 8H6l-3-5z" fill="#fff" stroke="#1040a0" stroke-width="1.400"/><path d="M11 4l10 5-8 9-8-4z" fill="#60d8f0" stroke="#1040a0"/><path d="M3 15l3 5h5" fill="#fce890" stroke="#1040a0"/></svg></span>
    <span class="i l1"><svg viewBox="0 0 24 24"><path d="M3 5h14v18H3z" fill="#2a9a9a" stroke="#111"/><path d="M17 5l5-3v18l-5 3z" fill="#111"/><path d="M10 6v16" stroke="#fce060" stroke-width="3" stroke-dasharray="2 1"/></svg></span>
    <i class="grip l205"></i>
    <span class="i l8"><svg viewBox="0 0 24 24"><path d="M2 21q6-11 11-9 7 3 5 5M6 4q8-2 12 3 3 4-2 7" fill="none" stroke="#333" stroke-width="1.300"/><path d="M3 22h3M6 3l3 2" stroke="#e0c000" stroke-width="1.800"/></svg></span>
    <span class="i l2"><svg viewBox="0 0 24 24"><path d="M3 18q0-12 10-12t10 12q-10-6-20 0z" fill="#50d0e8" stroke="#123"/><path d="M3 18q10-6 20 0l-1-4q-9-5-18 0z" fill="#fce840"/></svg></span>
    <span class="i l2"><svg viewBox="0 0 24 24"><path d="M3 22V12q0-9 9-9h10" fill="none" stroke="#16889a" stroke-width="2.400"/><path d="M3 22v-7M12 3h10" stroke="#111" stroke-width="1"/></svg></span>
    <span class="i l2"><svg viewBox="0 0 24 24"><path d="M2 10q3-7 10-7t10 7M6 13q5-4 10 2 3 4-1 8" fill="none" stroke="#112" stroke-width="1.300"/><path d="M12 0l3 3-3 3z" fill="#1030c0"/></svg></span>
    <span class="i l2"><svg viewBox="0 0 24 24"><path d="M3 7l9-5 9 5v10l-9 6-9-6z" fill="#eef" stroke="#223"/><path d="M3 7l9 5 9-5M12 12v11" fill="none" stroke="#223"/><path d="M13 13l8 8" stroke="#e0a020" stroke-width="2.400"/><path d="M15 21h6v-6z" fill="#fc0"/></svg></span>
    <i class="grip l28"></i>
    <span class="i l8"><svg viewBox="0 0 24 24"><rect x="10" y="10" width="4" height="4" fill="#10207a"/></svg></span>
    <span class="i l2"><svg viewBox="0 0 24 24"><path d="M3 22L21 3" stroke="#103080" stroke-width="1.500"/></svg></span>
    <span class="i l2"><svg viewBox="0 0 24 24"><path d="M2 18l7-9h14l-7 9z" fill="#fce890" stroke="#111"/></svg></span>
    <span class="i l2"><svg viewBox="0 0 24 24"><circle cx="12" cy="12" r="9" fill="none" stroke="#1050b0" stroke-width="1.500"/></svg></span>
    <span class="i l3"><svg viewBox="0 0 24 24"><path d="M12 2q6 1 2 6-5 5-3 8" fill="none" stroke="#2090a0" stroke-width="1.400"/><path d="M3 21q0-7 9-6t9 6-9 2-9-2z" fill="#fce040" stroke="#1a50a0"/><path d="M3 17q9-6 18 0" fill="#60d0e8" stroke="#1a50a0"/></svg></span>
    <span class="i l2"><svg viewBox="0 0 24 24"><path d="M1 12L10 3l12 4-2 12-6-3-6 6z" fill="#40c0e8" stroke="#123"/><path d="M10 3l4 13" stroke="#123"/><path d="M14 8l6 3-2 6z" fill="#2070d0"/><path d="M5 10q3-5 8-3" stroke="#fce040" stroke-width="2.200" fill="none"/></svg></span>
    <span class="i l3"><svg viewBox="0 0 24 24"><path d="M2 13l9-9 11 3-8 11z" fill="#60d8f0" stroke="#1040a0"/><path d="M9 7q5-2 9 2" stroke="#fce040" stroke-width="2.400" fill="none"/><path d="M2 13l9 9" stroke="#1040a0" stroke-width="1.400"/></svg></span>
    <span class="i l2"><svg viewBox="0 0 24 24"><path d="M1 20l6-7h16l-8 7z" fill="#60d8f0" stroke="#1040a0"/><path d="M5 16l7-12 8 3-7 10" fill="#70d8e8" stroke="#1040a0"/><path d="M5 18L21 8" stroke="#fce040" stroke-width="2"/></svg></span>
    <span class="i l1"><svg viewBox="0 0 24 24"><path d="M3 22q3-9 9-8t7 0q3-4-2-8-3-3-7-2" fill="none" stroke="#1040a0" stroke-width="1.500"/></svg></span>
    <span class="i l2"><svg viewBox="0 0 24 24"><path d="M2 22L22 2" stroke="#1040a0"/><path d="M7 9l5-4 7 7-5 5z" fill="#70b0f0" stroke="#1040a0"/><path d="M9 9l6 6M11 7l6 6" stroke="#1040a0"/></svg></span>
    <span class="i l2"><svg viewBox="0 0 24 24"><ellipse cx="12" cy="12" rx="10" ry="11" fill="none" stroke="#1040d0" stroke-width="1.200"/><ellipse cx="12" cy="12" rx="7" ry="8" fill="none" stroke="#1040d0" stroke-width="1.200"/><ellipse cx="12" cy="12" rx="4" ry="5" fill="none" stroke="#1040d0" stroke-width="1.200"/><circle cx="12" cy="12" r="1.500" fill="none" stroke="#1040d0"/></svg></span>
    <i class="grip l15"></i>
    <span class="i l8"><svg viewBox="0 0 24 24"><path d="M1 9l21-8v18L1 23z" fill="#50d0f0" stroke="#103080" stroke-width="1.300"/><path d="M1 9l11 6L22 1" fill="#e0f8ff" stroke="#103080"/></svg></span>
    <span class="i l2"><svg viewBox="0 0 24 24"><g fill="#40b0d8" stroke="#1020a0"><path d="M2 4l6-1v6H2z"/><path d="M14 4l6-1v6h-6z"/><path d="M5 15l6-1v6H5z"/><path d="M15 15l6-1v6h-6z"/></g><path d="M2 8h6M14 8h6M5 19h6M15 19h6" stroke="#1020a0"/></svg></span>
    <span class="i l4"><svg viewBox="0 0 24 24"><path d="M1 4l6-1v6H1z" fill="#40b0d8" stroke="#1020a0"/><path d="M5 7v15l3-3 3 5 2-1-3-5h4z" fill="#111"/><text x="13" y="18" class="q2">?</text></svg></span>
    <div class="dslogo"><svg viewBox="0 0 44 34"><path d="M14 2h11l-5 5q6 1 3 5-3 2-8 0" fill="none" stroke="#c02030" stroke-width="1.600"/><text x="3" y="21" class="dsd">D</text><text x="17" y="19" class="dss">S</text><text x="10" y="33" class="dsc">CATIA</text></svg></div>
  </div>

  <div class="bar row2">
    <i class="grip"></i>
    <span class="i l7"><svg viewBox="0 0 24 24"><circle cx="6" cy="5" r="4" fill="#3a80c8" stroke="#123"/><path d="M11 5q7-2 9 4" fill="none" stroke="#123"/><path d="M3 18l5-5h13v7l-4 3H3z" fill="#fff" stroke="#222"/><path d="M3 18h14v5M17 18l4-5" fill="none" stroke="#222"/></svg></span>
    <i class="grip l17"></i>
    <span class="i l7"><svg viewBox="0 0 24 24"><path d="M3 6h18M3 6l4-3M3 6l4 3M21 6l-4-3M21 6l-4 3" fill="none" stroke="#102080"/><path d="M2 14h20v6H2z" fill="#f8e8d0" stroke="#222"/><path d="M5 14v3M9 14v3M13 14v3M17 14v3" stroke="#c02020"/></svg></span>
    <span class="i l3"><svg viewBox="0 0 24 24"><path d="M5 2h13v20h-8V10H5z" fill="#444" stroke="#111"/><circle cx="7" cy="10" r="4" fill="#50b090" stroke="#111"/></svg></span>
    <span class="i l2"><svg viewBox="0 0 24 24"><circle cx="12" cy="5" r="3" fill="none" stroke="#333" stroke-width="1.500"/><path d="M8 9h8v12q-4 2-8 0z" fill="#c8a830" stroke="#333"/><path d="M12 9v13" stroke="#e8d060"/></svg></span>
    <i class="grip l16"></i>
    <span class="i l8"><svg viewBox="0 0 24 24"><path d="M2 7h6l2-2h5l2 2h5v13H2z" fill="#666" stroke="#111"/><circle cx="12" cy="13" r="5" fill="#fff" stroke="#111"/><circle cx="12" cy="13" r="3" fill="#222"/></svg></span>
    <i class="grip l13"></i>
    <span class="i l8"><svg viewBox="0 0 24 24"><circle cx="12" cy="12" r="10" fill="none" stroke="#bbb" stroke-width="3"/><path d="M7 12q3-5 9-2 0 6-6 5" fill="none" stroke="#bbb" stroke-width="2.500"/></svg></span>
    <span class="i l2"><svg viewBox="0 0 24 24"><circle cx="12" cy="12" r="10" fill="#bde" stroke="#102040" stroke-width="2"/><path d="M10 3h3v9l5 1v8H8l-3-7 3 1z" fill="#fff" stroke="#111"/></svg></span>
    <span class="i l3"><svg viewBox="0 0 24 24"><path d="M12 14V3M12 14h10M12 14L3 22" fill="none" stroke="#111"/><path d="M9 6l3-4 3 4M19 11l3 3-3 3" fill="none" stroke="#111"/></svg></span>
    <span class="i l1"><svg viewBox="0 0 24 24"><text x="1" y="10" class="num">10,1</text><text x="1" y="22" class="num num2">10,0</text></svg></span>
    <span class="i l4 d"><svg viewBox="0 0 24 24"><path d="M4 6l4-4h12v16l-4 4H4z" fill="#50d8f0" stroke="#111"/><path d="M4 6h12v16M16 6l4-4" fill="none" stroke="#111"/><ellipse cx="12" cy="14" rx="11" ry="3" fill="none" stroke="#222"/></svg></span>
    <span class="i l2"><svg viewBox="0 0 24 24"><rect x="1" y="4" width="7" height="5" fill="none" stroke="#1040c0"/><rect x="16" y="14" width="7" height="5" fill="none" stroke="#1040c0"/><path d="M8 7h8M8 17h8" stroke="#1040c0"/><path d="M14 3l-6 10h4L8 22l8-11h-4z" fill="#c01030"/></svg></span>
    <span class="i l3 d"><svg viewBox="0 0 24 24"><rect x="6" y="2" width="12" height="5" fill="#fff" stroke="#1030c0"/><rect x="6" y="9" width="12" height="5" fill="#fff" stroke="#1030c0"/><rect x="6" y="16" width="12" height="5" fill="#fff" stroke="#1030c0"/></svg></span>
    <span class="i l3"><svg viewBox="0 0 24 24"><path d="M2 13L13 3l9 5-11 11z" fill="#c8e8f8" stroke="#1040a0" stroke-width="1.400"/><path d="M2 13v4l9 6v-4z" fill="#fff" stroke="#1040a0"/><path d="M11 19L22 8v4L11 23z" fill="#40a0e0" stroke="#1040a0"/></svg></span>
    <span class="combo c-part l3"><span class="ct">PartBody</span><b></b></span>
    <i class="grip l9"></i>
    <span class="i l7"><svg viewBox="0 0 24 24"><path d="M2 18l10-6h11l-9 8z" fill="#1a5a8a" stroke="#111"/><path d="M2 18h12v5H2z" fill="#2aa8b8" stroke="#111"/><path d="M14 20l9-8v3l-9 8z" fill="#7a1020"/><path d="M12 2l2 4 4-1-2 4 2 3-5-1" fill="none" stroke="#fce040"/><path d="M10 14V5M6 7l4-2" stroke="#c02020"/></svg></span>
    <span class="i l3"><svg viewBox="0 0 24 24"><path d="M2 8l9-6 12 5-2 15-7-5-6 6z" fill="#40c0d8" stroke="#112"/><path d="M6 8q4-4 4 5t-4 3M14 8q7 2 5 8" fill="none" stroke="#f06020" stroke-width="2"/><path d="M10 8l5 3-3 3z" fill="#fce040"/></svg></span>
    <span class="i l1"><svg viewBox="0 0 24 24"><rect x="1" y="1" width="22" height="22" fill="#f8e8b0" stroke="#333"/><circle cx="11" cy="11" r="8" fill="none" stroke="#333"/><circle cx="11" cy="11" r="4" fill="none" stroke="#333"/><path d="M11 1v22M1 11h22" stroke="#333"/><circle cx="16" cy="16" r="5" fill="#bbd" stroke="#224"/></svg></span>
    <span class="i l2"><svg viewBox="0 0 24 24"><path d="M3 8l6-4 12-2-2 6-10 3z" fill="#2a9a80" stroke="#223"/><path d="M3 12l16-4v5L3 17z" fill="#c03020" stroke="#fce040"/><path d="M3 17l15-3v5L5 23z" fill="#2a9a80" stroke="#223"/></svg></span>
    <i class="grip l12"></i>
    <span class="i l6"><svg viewBox="0 0 24 24"><path d="M4 10h16v9l-5 4H9l-5-4z" fill="#f0a040" stroke="#a03010" stroke-width="1.500"/><path d="M9 10v6h6v-6" fill="#f8e0a0" stroke="#a03010"/><path d="M8 10L20 1l2 6-2 3z" fill="#c89078"/></svg></span>
    <i class="grip l23"></i>
    <span class="combo c-w l9"><span class="ct ct-t">Automa</span><b></b></span>
    <span class="combo c-g l3"><span class="ct">Auto</span><b></b></span>
    <span class="combo c-w2 l2"><span class="ct">Auto</span><b></b></span>
    <span class="combo c-w3 l3"><span class="ct">Auto</span><b></b></span>
    <span class="combo c-w4 l4"><span class="ct">Aut</span><b></b></span>
    <span class="combo c-dis l5"><span class="ct">Aut</span><b></b></span>
    <span class="combo c-w l2"><span class="ct">None</span><b></b></span>
    <span class="i"><svg viewBox="0 0 24 24"><path d="M1 13h12M1 17h14M1 21h16" stroke="#1040e0" stroke-width="1.400"/><path d="M9 10l7-5 4 4-7 7z" fill="#fce040" stroke="#111"/><path d="M16 5l5-4 2 2-3 6z" fill="#102050"/></svg></span>
    <span class="i l3"><svg viewBox="0 0 24 24"><circle cx="8" cy="16" r="7" fill="#f8a030"/><path d="M2 18a7 7 0 0012 0z" fill="#c030c0"/><path d="M13 11l8-7 2 2-7 8z" fill="#fff" stroke="#1040a0"/><path d="M18 2l2 1M21 1l1 2" stroke="#c04040"/></svg></span>
  </div>
</div>

<footer class="status">
  <span class="status-text">Select an object or a command</span>
  <span class="status-input"></span>
  <span class="sb"><svg viewBox="0 0 24 16"><rect x="7" y="2" width="10" height="10" fill="none" stroke="#999"/><path d="M6 14h12" stroke="#888"/></svg></span>
  <span class="sb"><svg viewBox="0 0 24 16"><circle cx="12" cy="6" r="5" fill="none" stroke="#999"/><path d="M5 14h14" stroke="#888"/></svg></span>
</footer>
</div>
</body>
</html>
```

FILE: styles.css
```css
* { box-sizing: border-box; }
html, body { margin: 0; padding: 0; }
body { background: #d0d0e6; overflow: hidden; font-family: "Noto Sans", "Liberation Sans", sans-serif; }
i, u { font-style: normal; }
.app { width: 1679px; height: 1008px; display: flex; flex-direction: column; overflow: hidden; }

.title { height: 20px; flex: none; display: flex; align-items: center; position: relative;
  background:
    linear-gradient(90deg, rgba(150,150,165,.85) 0, rgba(170,170,182,.85) 170px, rgba(110,110,130,.35) 230px, rgba(0,0,0,0) 258px),
    radial-gradient(ellipse 260px 40px at 800px 6px, #1c3150 0, rgba(28,49,80,0) 100%),
    linear-gradient(#0a1a38, #04122c); }
.logo { width: 20px; height: 20px; flex: none; }
.title-text { font: 12px "Noto Sans", sans-serif; color: #14141e; margin-left: 1px; letter-spacing: -.05px; }
.winbtns { margin-left: auto; display: flex; height: 17px; align-self: flex-start; border: 1px solid #59677e; border-top: 0; border-radius: 0 0 3px 3px; }
.wb { height: 16px; display: block; border-right: 1px solid #59677e; }
.wb:last-child { border-right: 0; }
.wb svg { width: 100%; height: 100%; display: block; }
.wb-min { width: 27px; }
.wb-max { width: 27px; }
.wb-close { width: 50px; }

.menu { height: 21px; flex: none; display: grid; grid-template-columns: 20px 48px 100px 42px 44px 48px 54px 53px 68px 1fr; align-items: stretch;
  background: #cfcfe6; border-top: 1px solid #f0f0f8; }
.m { font: 12px/21px "Noto Sans", sans-serif; color: #1a1a2e; padding-left: 8px; white-space: nowrap; }
.m-start { background: #fde8c8; }
.mdi { display: flex; justify-content: flex-end; gap: 2px; padding-top: 2px; }
.mb { width: 17px; height: 17px; background: #dde8f6; border: 1px solid #fff; }
.mb svg { width: 100%; height: 100%; display: block; }

.bar { display: flex; align-items: center; flex: none; position: relative; }
.top { height: 36px; padding: 3px 0 0 7px; background: linear-gradient(#fff 0, #f2f2fa 3px, #d6d6ea 12px, #cfcfe6 22px, #b4b4c8 34px, #a0a0b4 36px); }
.shade { height: 2px; flex: none; background: #58586c; border-bottom: 1px solid #c4c4d0; }

.i { width: 26px; height: 26px; flex: none; display: flex; align-items: center; justify-content: center; position: relative; }
.i svg { width: 24px; height: 24px; display: block; overflow: visible; }
.i.n { width: 14px; }
.i.n svg { width: 14px; }
.d::after { content: ""; position: absolute; left: 22px; top: 24px; border: 3.500px solid transparent; border-top: 4px solid #000; border-bottom: 0; }

.grip { width: 2px; height: 20px; flex: none; background: #f4f4fa; border-right: 1px solid #a8a8bc; margin-top: -8px; }
.vs { width: 2px; height: 33px; flex: none; background: #f4f4fa; border-right: 1px solid #a8a8bc; }
.push { margin-left: 342px; }

.l1 { margin-left: 1px; } .l2 { margin-left: 2px; } .l3 { margin-left: 3px; } .l4 { margin-left: 4px; } .l5 { margin-left: 5px; }
.l6 { margin-left: 6px; } .l7 { margin-left: 7px; } .l8 { margin-left: 8px; } .l9 { margin-left: 9px; } .l11 { margin-left: 11px; }
.l12 { margin-left: 12px; } .l13 { margin-left: 13px; } .l15 { margin-left: 15px; } .l16 { margin-left: 16px; } .l17 { margin-left: 17px; }
.l22 { margin-left: 22px; } .l23 { margin-left: 23px; } .l25 { margin-left: 25px; } .l26 { margin-left: 26px; } .l28 { margin-left: 28px; }
.l29 { margin-left: 29px; } .l205 { margin-left: 205px; }
.t1 { margin-top: 1px; } .t2 { margin-top: 2px; } .t3 { margin-top: 3px; } .t4 { margin-top: 4px; } .t5 { margin-top: 5px; }
.t6 { margin-top: 6px; } .t7 { margin-top: 7px; } .t8 { margin-top: 8px; } .t9 { margin-top: 9px; } .t10 { margin-top: 10px; }
.t11 { margin-top: 11px; } .t12 { margin-top: 12px; } .t14 { margin-top: 14px; } .t16 { margin-top: 16px; } .t23 { margin-top: 23px; }
.t25 { margin-top: 25px; } .t62 { margin-top: 62px; }

.mid { flex: none; height: 829px; display: flex; }
.view { width: 1603px; flex: none; position: relative; background: #343264; border-left: 1px solid #9a9aa8; overflow: hidden; }
.canvas { position: absolute; left: -1px; top: 0; width: 1602px; height: 829px; }
.canvas * { vector-effect: non-scaling-stroke; }

.lines path { fill: none; stroke: #fff; stroke-width: 2; }
.node circle { fill: #a8a8b4; stroke: #6c6c7c; }
.node path { stroke: #000; stroke-width: 2.400; fill: none; }

.lav { fill: #c9c9f2; stroke: #000; }
.sec { fill: #c9c9f2; }
.arc { fill: none; stroke: #000; stroke-width: 1; }
.side { fill: #5e5e78; stroke: #000; stroke-width: .8; }
.rk { fill: none; stroke: #000; stroke-width: 5.400; }
.rl { fill: none; stroke: #d8d8f8; stroke-width: 3; }

.compass path { fill: url(#dark); stroke: #d8d0f8; stroke-width: 1.500; stroke-linejoin: round; }
.compass .red { fill: #d00018; }
.compass .ball { fill: #d8d0f8; }
.compass text { font: bold 11px "Liberation Sans", sans-serif; fill: #f0f080; }
.axis path { stroke: #fff; stroke-width: 1.200; fill: none; }
.axis text { font: 11px "Liberation Sans", sans-serif; fill: #fff; }

.tree { position: relative; list-style: none; margin: 0; padding: 16.500px 0 0; }
.row { height: 39.300px; display: flex; align-items: center; color: #fff; font: 18.700px/1 "Noto Sans", sans-serif; white-space: nowrap; }
.ls-up { letter-spacing: .35px; }
.ls-down { letter-spacing: -.35px; }
.ti { width: 32px; height: 32px; flex: none; margin-right: 6px; display: block; overflow: visible; }
.ti-root { width: 28px; height: 30px; margin-right: 4px; }
.ti-mv { width: 26px; height: 30px; margin-right: 8px; }
.ti-vol { margin-right: 5px; }
.r0 { padding-left: 7px; }
.r1 { padding-left: 29px; }
.r2 { padding-left: 31px; }
.r3 { padding-left: 62px; }
.r4 { padding-left: 85px; }

.vol { position: absolute; left: 877px; top: 397px; height: 14px; font: 12px/14px "Noto Sans", sans-serif; color: #202030; white-space: nowrap; letter-spacing: .85px; }
.vol::after { content: ""; position: absolute; left: 1px; top: 14px; width: 5px; height: 4px; background: #10ee10; border-radius: 0 0 3px 3px; }
.vol-hl { display: inline-block; background: #10ee10; padding-left: 2px; width: 134px; }

.dock { width: 76px; flex: none; display: flex; background: linear-gradient(90deg, #fff 0, #e8e8f4 4px, #cfcfe6 14px, #cfcfe6 66px, #b4b4c8 76px); }
.col { width: 38px; flex: none; display: flex; flex-direction: column; align-items: center; }
.col .i svg { width: 23px; height: 23px; }
.dg { width: 17px; height: 2px; flex: none; background: #f6f6fc; border-bottom: 1px solid #a0a0b0; }
.dg.wide { width: 34px; }

.bottom { flex: none; height: 78px; display: flex; flex-direction: column; background: linear-gradient(#fff 0, #f0f0f8 2px, #d4d4ea 8px, #cfcfe6 60px, #b8b8cc 76px, #a8a8bc 78px); }
.row1 { height: 41px; padding-left: 24px; }
.row1 .grip { margin-top: -12px; height: 18px; }
.row2 { height: 37px; padding-left: 15px; }
.row2 .grip { margin-top: -10px; height: 16px; }
.dslogo { position: absolute; right: 4px; top: 0; width: 44px; height: 34px; }
.dslogo svg { width: 100%; height: 100%; display: block; overflow: visible; }

.combo { height: 24px; flex: none; display: flex; align-items: center; padding-left: 7px; position: relative; font: 12px "Noto Sans", "Liberation Sans", sans-serif; color: #222; background: #fff; white-space: nowrap; }
.ct { display: block; padding-bottom: 3px; }
.ct-t { letter-spacing: -.35px; }
.combo b { position: absolute; right: 5px; top: 11px; border: 4px solid transparent; border-top: 4px solid #111; border-bottom: 0; }
.c-part { width: 163px; padding-left: 4px; background: linear-gradient(#f6f6fa, #d8d8de); border: 1px solid #8a8a96; border-radius: 3px; }
.c-part .ct { padding-bottom: 0; }
.c-w { width: 64px; }
.c-g { width: 65px; padding-left: 3px; background: linear-gradient(#f4f4f6, #bdbdc4); border: 1px solid #88889a; border-radius: 3px; }
.c-g .ct { padding-bottom: 0; }
.c-w2 { width: 64px; }
.c-w3 { width: 63px; }
.c-w4 { width: 41px; }
.c-dis { width: 42px; padding-left: 5px; color: #888; background: linear-gradient(90deg, #ececec 0, #ececec 23px, #fff 23px); }
.c-dis b { border-top-color: #999; }

.status { flex: none; height: 23px; display: flex; align-items: stretch; background: #cfcfe6; border-top: 1px solid #55556a; position: relative; }
.status-text { font: 12px/20px "Noto Sans", sans-serif; color: #1a1a2e; padding-left: 3px; width: 1313px; flex: none; }
.status-input { width: 299px; flex: none; background: #fff; margin-top: 2px; }
.sb { width: 32px; flex: none; margin-left: 2px; background: #c8c8dc; border-left: 1px solid #f4f4fa; }
.sb svg { width: 100%; height: 100%; display: block; }

.q { font: bold 18px "Liberation Sans", sans-serif; fill: #1a2a90; }
.q2 { font: bold 17px "Liberation Sans", sans-serif; fill: #1020a0; }
.fx { font: italic 22px "Liberation Serif", serif; fill: #111; }
.fx2 { font: bold 10px "Liberation Sans", sans-serif; fill: #111; }
.br { font: 15px "Liberation Sans", sans-serif; fill: #333; }
.abc { font: 9px "Liberation Sans", sans-serif; fill: #1a2a8a; }
.num { font: bold 10px "Liberation Sans", sans-serif; fill: #111; }
.num2 { fill: #1040b0; }
.dsd { font: italic bold 15px "Liberation Sans", sans-serif; fill: #2a3a90; }
.dss { font: italic bold 16px "Liberation Sans", sans-serif; fill: #e8a030; }
.dsc { font: italic bold 10px "Liberation Sans", sans-serif; fill: #2a3a90; }
```
